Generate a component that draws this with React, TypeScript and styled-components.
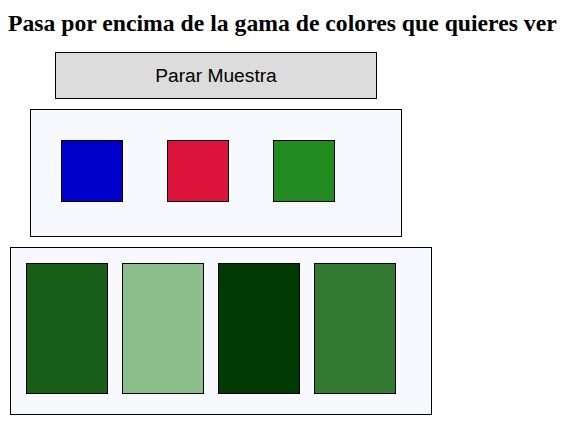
import styled, { createGlobalStyle } from 'styled-components';

const GlobalStyle = createGlobalStyle`
  body {
    margin: 8px;
    background: #ffffff;
    font-family: 'Liberation Serif', serif;
  }
`;

const baseColors = ['#0000cd', '#dc143c', '#228b22'];
const shades = ['#185e18', '#8bbe8b', '#013a03', '#327a32'];

export default function App() {
  return (
    <>
      <GlobalStyle />
      <Title>Pasa por encima de la gama de colores que quieres ver</Title>
      <StopButton>Parar Muestra</StopButton>
      <BasePanel>
        {baseColors.map((c) => (
          <Swatch key={c} color={c} />
        ))}
      </BasePanel>
      <ShadePanel>
        {shades.map((c) => (
          <Shade key={c} color={c} />
        ))}
      </ShadePanel>
    </>
  );
}

const Title = styled.h2`
  margin: 0;
  padding-top: 2px;
  font-family: 'Liberation Serif', serif;
  font-size: 23.7px;
  font-weight: bold;
  color: #000;
  line-height: 27px;
`;

const StopButton = styled.div`
  box-sizing: border-box;
  width: 322px;
  height: 47px;
  margin: 15px 0 0 47px;
  display: flex;
  align-items: center;
  justify-content: center;
  background: #dcdcdc;
  border: 1px solid #000;
  font-family: 'Liberation Sans', Arial, sans-serif;
  font-size: 19.2px;
  color: #000;
`;

const BasePanel = styled.div`
  box-sizing: border-box;
  width: 372px;
  height: 128px;
  margin: 10px 0 0 22px;
  padding: 30px 0 0 30px;
  display: flex;
  align-items: flex-start;
  gap: 44px;
  background: #f8f8ff;
  border: 1px solid #000;
`;

const Swatch = styled.div<{ color: string }>`
  box-sizing: border-box;
  width: 62px;
  height: 62px;
  background: ${({ color }) => color};
  border: 1px solid #000;
`;

const ShadePanel = styled.div`
  box-sizing: border-box;
  width: 422px;
  height: 168px;
  margin: 10px 0 0 2px;
  padding: 15px 0 0 15px;
  display: flex;
  align-items: flex-start;
  gap: 14px;
  background: #f8f8ff;
  border: 1px solid #000;
`;

const Shade = styled.div<{ color: string }>`
  box-sizing: border-box;
  width: 82px;
  height: 131px;
  background: ${({ color }) => color};
  border: 1px solid #000;
`;
